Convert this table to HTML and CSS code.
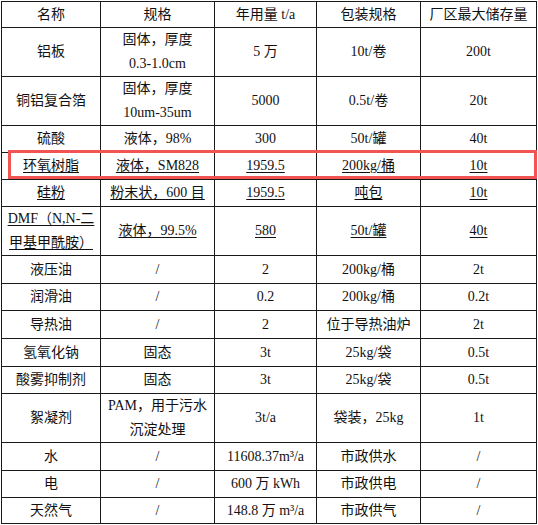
FILE: index.html
```html
<!DOCTYPE html>
<html lang="zh">
<head>
<meta charset="utf-8">
<link rel="stylesheet" href="styles.css">
</head>
<body>
<div class="wrap">
<table class="tbl">
<colgroup><col class="c1"><col class="c2"><col class="c3"><col class="c4"><col class="c5"></colgroup>
<tr class="h26"><td>名称</td><td>规格</td><td>年用量 t/a</td><td>包装规格</td><td>厂区最大储存量</td></tr>
<tr class="h49"><td>铝板</td><td>固体，厚度<br>0.3-1.0cm</td><td>5 万</td><td>10t/卷</td><td>200t</td></tr>
<tr class="h49"><td>铜铝复合箔</td><td>固体，厚度<br>10um-35um</td><td>5000</td><td>0.5t/卷</td><td>20t</td></tr>
<tr class="h27"><td>硫酸</td><td>液体，98%</td><td>300</td><td>50t/罐</td><td>40t</td></tr>
<tr class="h27 u"><td><span>环氧树脂</span></td><td><span>液体，SM828</span></td><td><span>1959.5</span></td><td><span>200kg/桶</span></td><td><span>10t</span></td></tr>
<tr class="h27 u"><td><span>硅粉</span></td><td><span>粉末状，600 目</span></td><td><span>1959.5</span></td><td><span>吨包</span></td><td><span>10t</span></td></tr>
<tr class="h48 u"><td><span>DMF（N,N-二<br>甲基甲酰胺）</span></td><td><span>液体，99.5%</span></td><td><span>580</span></td><td><span>50t/罐</span></td><td><span>40t</span></td></tr>
<tr class="h28"><td>液压油</td><td>/</td><td>2</td><td>200kg/桶</td><td>2t</td></tr>
<tr class="h27"><td>润滑油</td><td>/</td><td>0.2</td><td>200kg/桶</td><td>0.2t</td></tr>
<tr class="h28"><td>导热油</td><td>/</td><td>2</td><td>位于导热油炉</td><td>2t</td></tr>
<tr class="h28"><td>氢氧化钠</td><td>固态</td><td>3t</td><td>25kg/袋</td><td>0.5t</td></tr>
<tr class="h27"><td>酸雾抑制剂</td><td>固态</td><td>3t</td><td>25kg/袋</td><td>0.5t</td></tr>
<tr class="h49"><td>絮凝剂</td><td>PAM，用于污水<br>沉淀处理</td><td>3t/a</td><td>袋装，25kg</td><td>1t</td></tr>
<tr class="h28"><td>水</td><td>/</td><td>11608.37m³/a</td><td>市政供水</td><td>/</td></tr>
<tr class="h27"><td>电</td><td>/</td><td>600 万 kWh</td><td>市政供电</td><td>/</td></tr>
<tr class="h26"><td>天然气</td><td>/</td><td>148.8 万 m³/a</td><td>市政供气</td><td>/</td></tr>
</table>
<div class="highlight"></div>
</div>
</body>
</html>
```

FILE: styles.css
```css
html, body {
  margin: 0;
  padding: 0;
  background: #fff;
}
body {
  font-family: "Liberation Serif", "Noto Sans CJK SC", serif;
  font-size: 14px;
  color: #111;
}
.wrap {
  position: relative;
  padding: 1px 0 0 1px;
  width: 537px;
}
.tbl {
  border-collapse: collapse;
  table-layout: fixed;
  width: 535px;
}
.c1 { width: 99px; }
.c2 { width: 114px; }
.c3 { width: 102px; }
.c4 { width: 104px; }
.c5 { width: 116px; }
.tbl td {
  border: 1px solid #1a1a1a;
  text-align: center;
  vertical-align: middle;
  padding: 0 2px;
  line-height: 24px;
  white-space: nowrap;
}
.h26 { height: 26px; }
.h27 { height: 27px; }
.h28 { height: 28px; }
.h48 { height: 48px; }
.h49 { height: 49px; }
.u td span {
  text-decoration: underline;
  text-underline-offset: 2px;
}
.highlight {
  position: absolute;
  left: 8px;
  top: 150px;
  width: 523px;
  height: 23px;
  border: 3px solid #f25454;
  pointer-events: none;
}
```
